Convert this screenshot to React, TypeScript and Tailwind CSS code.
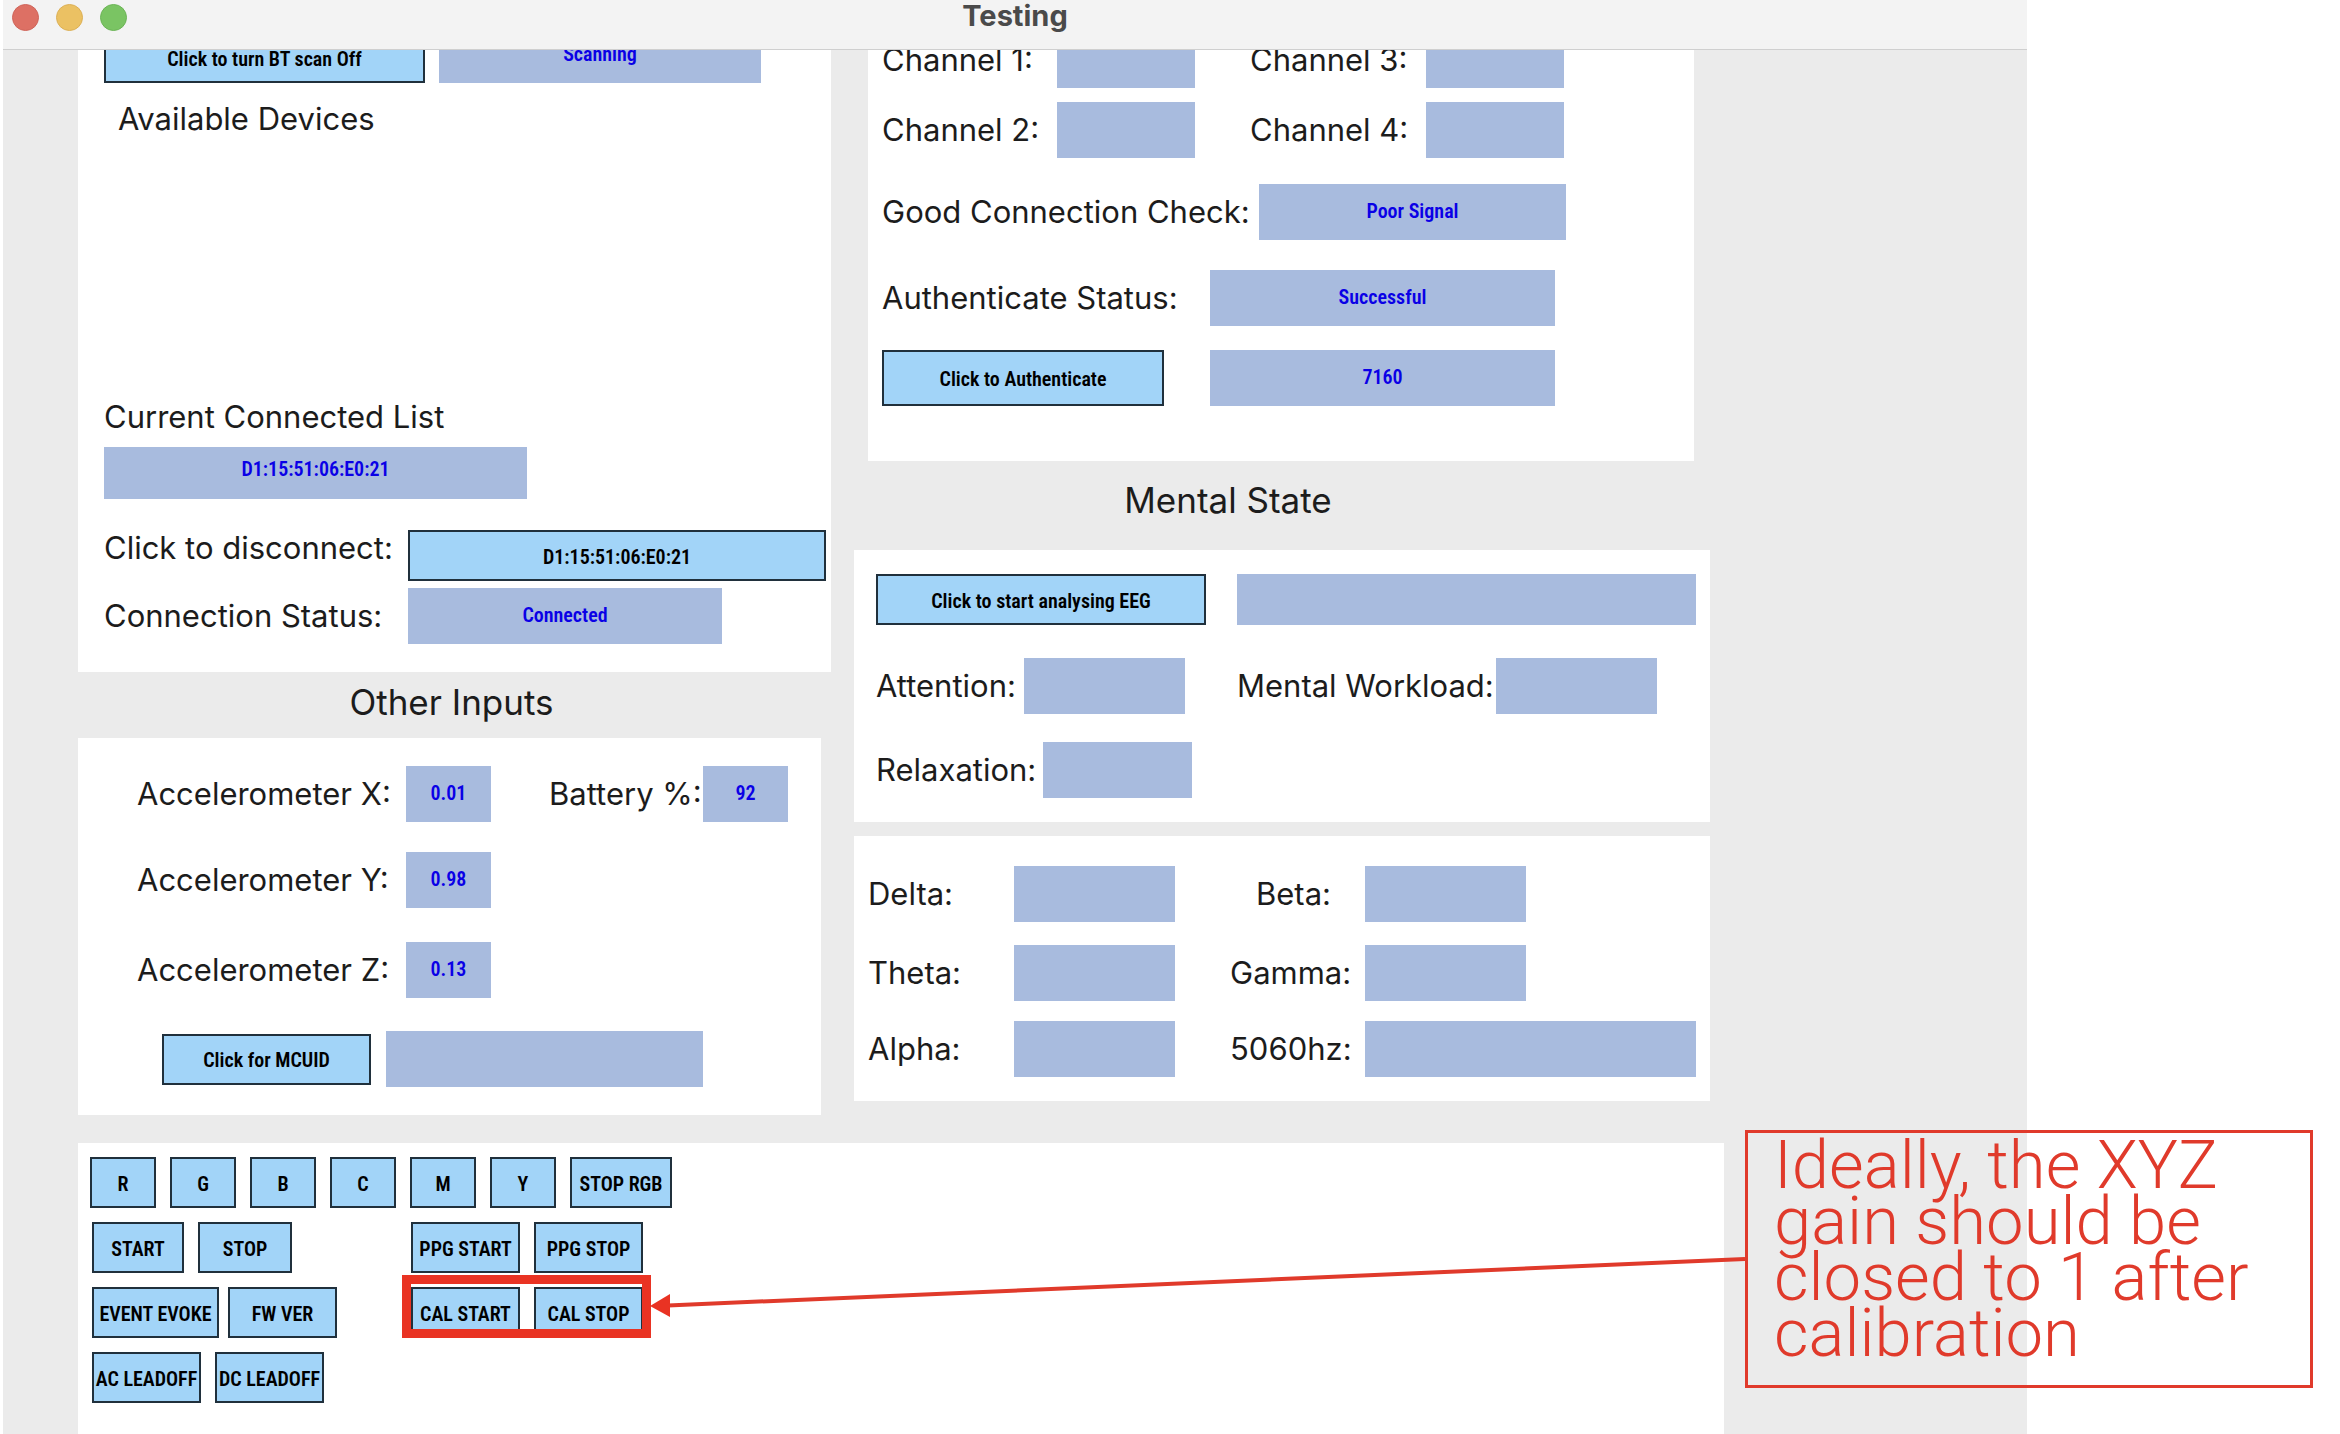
import React from 'react'

// ─── Shared pieces ────────────────────────────────────────────────────
type BoxProps = { className?: string; children?: React.ReactNode }

function ActionButton({ className = 'h-[51px]', children }: BoxProps) {
  return (
    <button
      type="button"
      className={`shrink-0 whitespace-nowrap border-2 border-[#20303c] bg-[#a2d4f8] pt-[2px] text-center font-['Roboto_Condensed','Liberation_Sans_Narrow','Liberation_Sans',sans-serif] text-xl leading-6 font-semibold text-black ${className}`}
    >
      {children}
    </button>
  )
}

function Readout({ id, className = '', children }: BoxProps & { id: string }) {
  return (
    <output
      id={id}
      className={`flex shrink-0 items-center justify-center bg-[#a8bbde] font-['Roboto_Condensed','Liberation_Sans_Narrow','Liberation_Sans',sans-serif] text-xl leading-6 font-semibold text-[#0a00e6] ${className}`}
    >
      {children}
    </output>
  )
}

function Label({ htmlFor, className = '', children }: BoxProps & { htmlFor: string }) {
  return (
    <label htmlFor={htmlFor} className={`shrink-0 whitespace-nowrap ${className}`}>
      {children}
    </label>
  )
}

// ─── Left column ──────────────────────────────────────────────────────
function ConnectionPanel() {
  return (
    <section className="bg-white pr-[5px] pb-7 pl-[26px]">
      <div className="flex gap-[14px]">
        <ActionButton className="h-[51px] w-[321px]">Click to turn BT scan Off</ActionButton>
        <Readout id="scan" className="h-[51px] w-[322px] pb-2">Scanning</Readout>
      </div>

      <h3 className="mt-[18px] pl-[14px]">Available Devices</h3>
      <div className="h-[262px]" />

      <h3>Current Connected List</h3>
      <Readout id="connected-list" className="mt-3 h-[52px] w-[423px] pb-2">D1:15:51:06:E0:21</Readout>

      <div className="mt-[31px] flex items-start">
        <span className="w-[304px] shrink-0">Click to disconnect:</span>
        <ActionButton className="h-[51px] grow">D1:15:51:06:E0:21</ActionButton>
      </div>
      <div className="mt-[7px] flex items-center">
        <Label htmlFor="status" className="w-[304px]">Connection Status:</Label>
        <Readout id="status" className="h-14 w-[314px] pb-[2px]">Connected</Readout>
      </div>
    </section>
  )
}

function OtherInputs() {
  return (
    <section className="mr-[10px] bg-white px-[59px] pt-7 pb-7">
      <div className="flex items-center">
        <Label htmlFor="acc-x" className="w-[269px]">Accelerometer X:</Label>
        <Readout id="acc-x" className="h-14 w-[85px] pb-[2px]">0.01</Readout>
        <Label htmlFor="battery" className="ml-[58px] w-[154px]">Battery %:</Label>
        <Readout id="battery" className="h-14 w-[85px] pb-[2px]">92</Readout>
      </div>
      <div className="mt-[30px] flex items-center">
        <Label htmlFor="acc-y" className="w-[269px]">Accelerometer Y:</Label>
        <Readout id="acc-y" className="h-14 w-[85px] pb-[2px]">0.98</Readout>
      </div>
      <div className="mt-[34px] flex items-center">
        <Label htmlFor="acc-z" className="w-[269px]">Accelerometer Z:</Label>
        <Readout id="acc-z" className="h-14 w-[85px] pb-[2px]">0.13</Readout>
      </div>
      <div className="mt-[33px] flex items-center gap-[15px] pl-[25px]">
        <ActionButton className="h-[51px] w-[209px]">Click for MCUID</ActionButton>
        <Readout id="mcuid" className="h-14 w-[317px]" />
      </div>
    </section>
  )
}

// ─── Right column ─────────────────────────────────────────────────────
function SignalPanel() {
  return (
    <section className="mr-4 ml-[14px] bg-white pb-[55px] pl-[14px]">
      {[[1, 3], [2, 4]].map(([a, b]) => (
        <div key={a} className="mb-[14px] flex items-center">
          <Label htmlFor={`ch-${a}`} className="w-[175px]">Channel {a}:</Label>
          <Readout id={`ch-${a}`} className="h-14 w-[138px]" />
          <Label htmlFor={`ch-${b}`} className="ml-[55px] w-[176px]">Channel {b}:</Label>
          <Readout id={`ch-${b}`} className="h-14 w-[138px]" />
        </div>
      ))}
      <div className="mt-[26px] flex items-center">
        <Label htmlFor="check" className="w-[377px]">Good Connection Check:</Label>
        <Readout id="check" className="h-14 w-[307px] pb-[2px]">Poor Signal</Readout>
      </div>
      <div className="mt-[30px] flex items-center">
        <Label htmlFor="auth" className="w-[328px]">Authenticate Status:</Label>
        <Readout id="auth" className="h-14 w-[345px] pb-[2px]">Successful</Readout>
      </div>
      <div className="mt-6 flex items-center">
        <ActionButton className="mr-[46px] h-14 w-[282px]">Click to Authenticate</ActionButton>
        <Readout id="auth-code" className="h-14 w-[345px] pb-[2px]">7160</Readout>
      </div>
    </section>
  )
}

function MentalState() {
  return (
    <section className="bg-white px-[14px] py-6 pl-[22px]">
      <div className="flex items-center gap-[31px]">
        <ActionButton className="h-[51px] w-[330px]">Click to start analysing EEG</ActionButton>
        <Readout id="eeg" className="h-[51px] grow" />
      </div>
      <div className="mt-[33px] flex items-center">
        <Label htmlFor="attention" className="w-[148px]">Attention:</Label>
        <Readout id="attention" className="h-14 w-[161px]" />
        <Label htmlFor="workload" className="ml-[52px] w-[259px]">Mental Workload:</Label>
        <Readout id="workload" className="h-14 w-[161px]" />
      </div>
      <div className="mt-7 flex items-center">
        <Label htmlFor="relaxation" className="w-[167px]">Relaxation:</Label>
        <Readout id="relaxation" className="h-14 w-[149px]" />
      </div>
    </section>
  )
}

function BandPower() {
  return (
    <section className="mt-[14px] bg-white px-[14px] pt-[30px] pb-6">
      <div className="flex items-center">
        <Label htmlFor="delta" className="w-[146px]">Delta:</Label>
        <Readout id="delta" className="h-14 w-[161px]" />
        <Label htmlFor="beta" className="w-[190px] pl-[81px]">Beta:</Label>
        <Readout id="beta" className="h-14 w-[161px]" />
      </div>
      <div className="mt-[23px] flex items-center">
        <Label htmlFor="theta" className="w-[146px]">Theta:</Label>
        <Readout id="theta" className="h-14 w-[161px]" />
        <Label htmlFor="gamma" className="w-[190px] pl-[55px]">Gamma:</Label>
        <Readout id="gamma" className="h-14 w-[161px]" />
      </div>
      <div className="mt-5 flex items-center">
        <Label htmlFor="alpha" className="w-[146px]">Alpha:</Label>
        <Readout id="alpha" className="h-14 w-[161px]" />
        <Label htmlFor="hz" className="w-[190px] pl-[55px]">5060hz:</Label>
        <Readout id="hz" className="h-14 grow" />
      </div>
    </section>
  )
}

// ─── Command buttons ──────────────────────────────────────────────────
function Commands() {
  return (
    <section className="grow bg-white px-3 pt-[14px] pb-[30px]">
      <div className="flex gap-[14px]">
        {['R', 'G', 'B', 'C', 'M', 'Y'].map((c) => (
          <ActionButton key={c} className="h-[51px] w-[66px]">{c}</ActionButton>
        ))}
        <ActionButton className="h-[51px] w-[102px]">STOP RGB</ActionButton>
      </div>

      <div className="mt-[14px] flex items-start pl-[2px]">
        <div className="flex w-[319px] flex-col gap-[14px]">
          <div className="flex gap-[14px]">
            <ActionButton className="h-[51px] w-[92px]">START</ActionButton>
            <ActionButton className="h-[51px] w-[94px]">STOP</ActionButton>
          </div>
          <div className="flex gap-[9px]">
            <ActionButton className="h-[51px] w-[127px]">EVENT EVOKE</ActionButton>
            <ActionButton className="h-[51px] w-[109px]">FW VER</ActionButton>
          </div>
          <div className="flex gap-[14px]">
            <ActionButton className="h-[51px] w-[109px]">AC LEADOFF</ActionButton>
            <ActionButton className="h-[51px] w-[109px]">DC LEADOFF</ActionButton>
          </div>
        </div>

        <div className="flex flex-col gap-[14px]">
          <div className="flex gap-[14px]">
            <ActionButton className="h-[51px] w-[109px]">PPG START</ActionButton>
            <ActionButton className="h-[51px] w-[109px]">PPG STOP</ActionButton>
          </div>
          <div className="relative flex gap-[14px]">
            <ActionButton className="h-[51px] w-[109px]">CAL START</ActionButton>
            <ActionButton className="h-[51px] w-[109px]">CAL STOP</ActionButton>
            {/* Highlight frame */}
            <div className="pointer-events-none absolute -top-3 -right-2 bottom-0 -left-[9px] border-[9px] border-[#e93323]" />
          </div>
        </div>
      </div>
    </section>
  )
}

export default function App() {
  return (
    <div className="relative min-h-screen overflow-hidden bg-white font-[Inter,'Liberation_Sans',sans-serif] text-[31px] leading-9 text-[#1c1c1c]">
      <div className="mr-[313px] ml-[3px] flex min-h-screen flex-col bg-[#ebebeb]">
        {/* ─── Title bar ─────────────────────────────────────────── */}
        <header className="grid h-[50px] shrink-0 grid-cols-[1fr_auto_1fr] items-start border-b border-[#cfcfcf] bg-[#f3f3f3]">
          <div className="flex gap-[17px] pt-1 pl-[9px]">
            <span className="size-[27px] rounded-full border border-[#cf6459] bg-[#dd7064]" />
            <span className="size-[27px] rounded-full border border-[#dcb056] bg-[#ebc163]" />
            <span className="size-[27px] rounded-full border border-[#6bb456] bg-[#7ac463]" />
          </div>
          <h1 className="text-[29px] leading-8 font-bold text-[#4a4a4a]">Testing</h1>
        </header>

        {/* ─── Scrolled content ──────────────────────────────────── */}
        <main className="flex grow flex-col overflow-hidden pr-[303px] pl-[75px]">
          <div className="-mt-[18px] flex justify-between">
            <div className="w-[753px] shrink-0">
              <ConnectionPanel />
              <h2 className="pt-2 pr-[6px] pb-[14px] text-center text-[35px] leading-11">Other Inputs</h2>
              <OtherInputs />
            </div>
            <div className="mr-[14px] w-[856px] shrink-0">
              <SignalPanel />
              <h2 className="pt-[17px] pr-[108px] pb-7 text-center text-[35px] leading-11">Mental State</h2>
              <MentalState />
              <BandPower />
            </div>
          </div>
          <div className="mt-7 flex grow flex-col">
            <Commands />
          </div>
        </main>
      </div>

      {/* ─── Annotation ──────────────────────────────────────────── */}
      <svg className="absolute top-[1250px] left-[650px]" width="1095" height="72" viewBox="0 0 1095 72" aria-hidden="true">
        <path d="M18 55.5 L1095 9" stroke="#e03a2b" strokeWidth="4" />
        <path d="M0 56 L20 44 L20 67 Z" fill="#e93323" />
      </svg>
      <aside className="absolute top-[1130px] left-[1745px] h-[258px] w-[568px] border-[3px] border-[#e03a2b] pt-1 pl-[26px]">
        <p className="font-[Roboto,sans-serif] text-[67px] leading-14 font-light text-[#e03a2b]">
          Ideally, the XYZ gain should be closed to 1 after calibration
        </p>
      </aside>
    </div>
  )
}
